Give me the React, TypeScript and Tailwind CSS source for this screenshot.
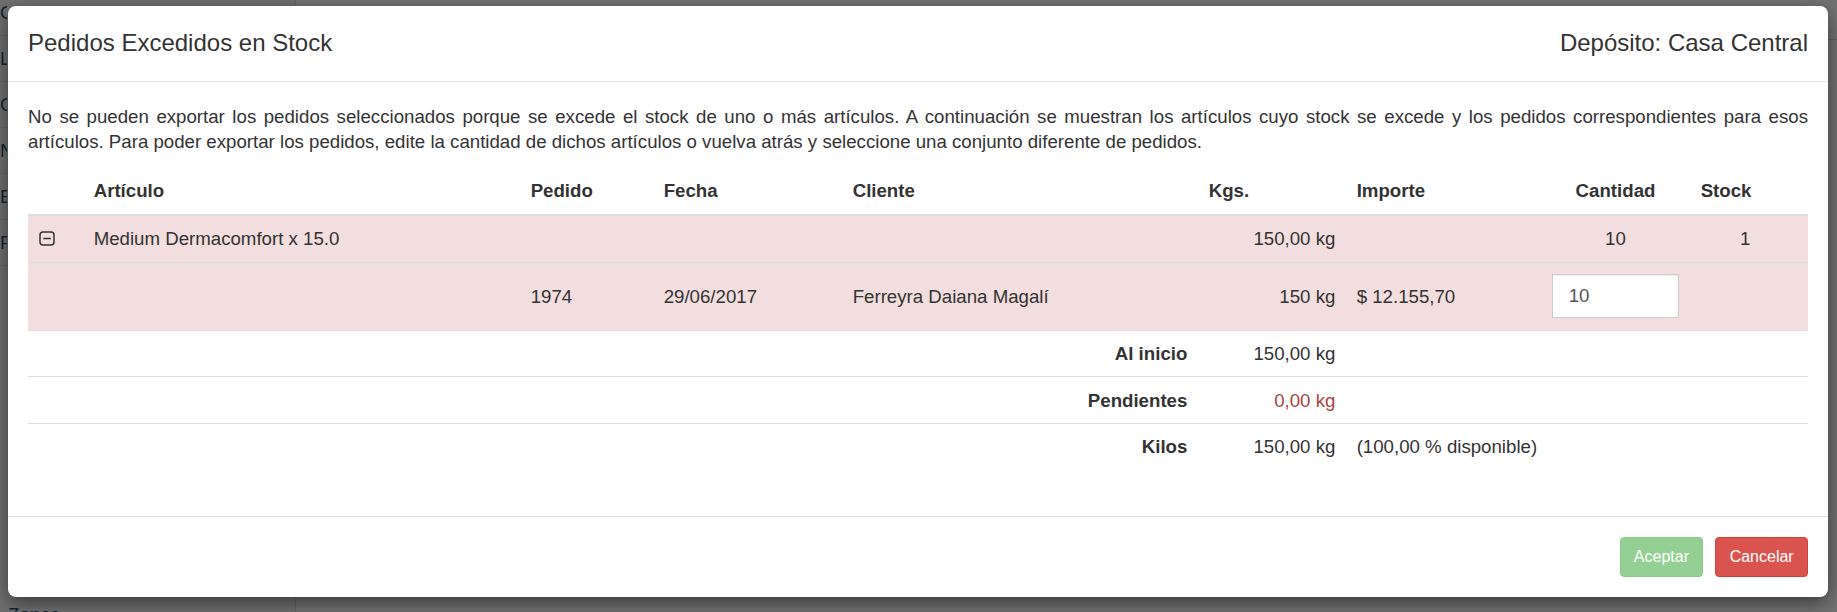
const sidebar = ["Clientes", "Locales", "Cobranzas", "Notas", "Envíos", "Pedidos"];

function MinusSquare() {
  return (
    <svg width="16" height="15" viewBox="0 0 16 15" className="block">
      <rect x="1" y="1" width="14" height="13" rx="3" fill="none" stroke="#333" strokeWidth="1.5" />
      <line x1="4.2" y1="7.5" x2="11.8" y2="7.5" stroke="#333" strokeWidth="1.5" />
    </svg>
  );
}

const th = "px-[10.67px] pt-[10.67px] pb-[10.5px] leading-[25px] font-bold text-left align-bottom";
const td = "px-[10.67px] py-[10.33px] leading-[25px] align-middle";
const tdFirst = "px-[10.67px] py-[10.5px] leading-[25px] align-middle";

export default function App() {
  return (
    <div className="relative h-[612px] w-[1837px] overflow-hidden bg-white font-['Liberation_Sans',Arial,sans-serif] text-[#333]">
      {/* page behind the modal */}
      <div className="flex h-full">
        <nav className="flex h-full w-[296px] flex-col border-r border-[#ddd] bg-[#f8f8f8]">
          <div className="-mt-[10px] w-[7px] overflow-hidden">
            {sidebar.map((item) => (
              <div
                key={item}
                className="h-[46px] whitespace-nowrap border-b border-[#e7e7e7] pt-[10px] text-[18.67px] leading-[26px] text-[#23527c]"
              >
                {item}
              </div>
            ))}
          </div>
          <div className="mt-auto -mb-[16px] pl-[8px] text-[18.67px] leading-[26px] text-[#23527c]">Zonas</div>
        </nav>
        <div className="flex-1">
          <div className="h-[40px] border-b border-[#ddd]" />
        </div>
      </div>

      {/* backdrop */}
      <div className="absolute inset-0 bg-black/55" />

      {/* modal */}
      <div className="absolute left-[8px] top-[6px] w-[1820px] rounded-[8px] bg-white shadow-[0_6px_20px_rgba(0,0,0,0.5)]">
        <div className="flex items-center justify-between border-b-[1.33px] border-[#e5e5e5] px-[20px] py-[20px]">
          <h4 className="text-[24px] leading-[34.67px]">Pedidos Excedidos en Stock</h4>
          <h4 className="text-[24px] leading-[34.67px]">Depósito: Casa Central</h4>
        </div>

        <div className="px-[20px] pt-[22.5px] pb-[20px] text-[18.67px]">
          <p className="mb-[13.33px] text-justify leading-[25px]">
            No se pueden exportar los pedidos seleccionados porque se excede el stock de uno o más artículos. A continuación se muestran los artículos cuyo stock se excede y los pedidos correspondientes para esos artículos. Para poder exportar los pedidos, edite la cantidad de dichos artículos o vuelva atrás y seleccione una conjunto diferente de pedidos.
          </p>

          <table className="mb-[26.67px] w-[1780px] table-fixed border-collapse">
            <colgroup>
              <col className="w-[55px]" />
              <col className="w-[437px]" />
              <col className="w-[133px]" />
              <col className="w-[189px]" />
              <col className="w-[356px]" />
              <col className="w-[148px]" />
              <col className="w-[195px]" />
              <col className="w-[149px]" />
              <col className="w-[71px]" />
              <col className="w-[47px]" />
            </colgroup>
            <thead>
              <tr className="border-b-[2.67px] border-[#ddd]">
                <th className={th}></th>
                <th className={th}>Artículo</th>
                <th className={th}>Pedido</th>
                <th className={th}>Fecha</th>
                <th className={th}>Cliente</th>
                <th className={th}>Kgs.</th>
                <th className={th}>Importe</th>
                <th className={`${th} !text-center`}>Cantidad</th>
                <th className={th}>Stock</th>
                <th className={th}></th>
              </tr>
            </thead>
            <tbody>
              <tr className="bg-[#f2dede]">
                <td className={tdFirst}>
                  <MinusSquare />
                </td>
                <td className={`${tdFirst} whitespace-nowrap`}>Medium Dermacomfort x 15.0</td>
                <td className={tdFirst}></td>
                <td className={tdFirst}></td>
                <td className={tdFirst}></td>
                <td className={`${tdFirst} text-right`}>150,00 kg</td>
                <td className={tdFirst}></td>
                <td className={`${tdFirst} text-center`}>10</td>
                <td className={`${tdFirst} text-right`}>1</td>
                <td className={tdFirst}></td>
              </tr>
              <tr className="border-t-[1.33px] border-[#ddd] bg-[#f2dede]">
                <td className={td}></td>
                <td className={td}></td>
                <td className={td}>1974</td>
                <td className={td}>29/06/2017</td>
                <td className={td}>Ferreyra Daiana Magalí</td>
                <td className={`${td} text-right`}>150 kg</td>
                <td className={`${td} whitespace-nowrap`}>$ 12.155,70</td>
                <td className="px-[10.67px] py-[11.2px] align-middle">
                  <input
                    readOnly
                    value="10"
                    className="block h-[44.5px] w-full border-[1.33px] border-[#ccc] bg-white px-[16px] text-[18.67px] text-[#555] shadow-[inset_0_1px_1px_rgba(0,0,0,0.075)] outline-none"
                  />
                </td>
                <td className={td}></td>
                <td className={td}></td>
              </tr>
              <tr className="border-t-[1.33px] border-[#ddd]">
                <td colSpan={5} className={`${td} text-right font-bold`}>Al inicio</td>
                <td className={`${td} text-right`}>150,00 kg</td>
                <td colSpan={4} className={td}></td>
              </tr>
              <tr className="border-t-[1.33px] border-[#ddd]">
                <td colSpan={5} className={`${td} text-right font-bold`}>Pendientes</td>
                <td className={`${td} text-right text-[#a94442]`}>0,00 kg</td>
                <td colSpan={4} className={td}></td>
              </tr>
              <tr className="border-t-[1.33px] border-[#ddd]">
                <td colSpan={5} className={`${td} text-right font-bold`}>Kilos</td>
                <td className={`${td} text-right`}>150,00 kg</td>
                <td colSpan={4} className={`${td} whitespace-nowrap`}>(100,00 % disponible)</td>
              </tr>
            </tbody>
          </table>
        </div>

        <div className="flex justify-end gap-[12px] border-t-[1.33px] border-[#e5e5e5] p-[20px]">
          <button className="h-[40px] rounded-[4px] border-[1.33px] border-[#4cae4c] bg-[#5cb85c] px-[13.33px] text-[16px] text-white opacity-65">
            Aceptar
          </button>
          <button className="h-[40px] rounded-[4px] border-[1.33px] border-[#d43f3a] bg-[#d9534f] px-[13.33px] text-[16px] text-white">
            Cancelar
          </button>
        </div>
      </div>
    </div>
  );
}
